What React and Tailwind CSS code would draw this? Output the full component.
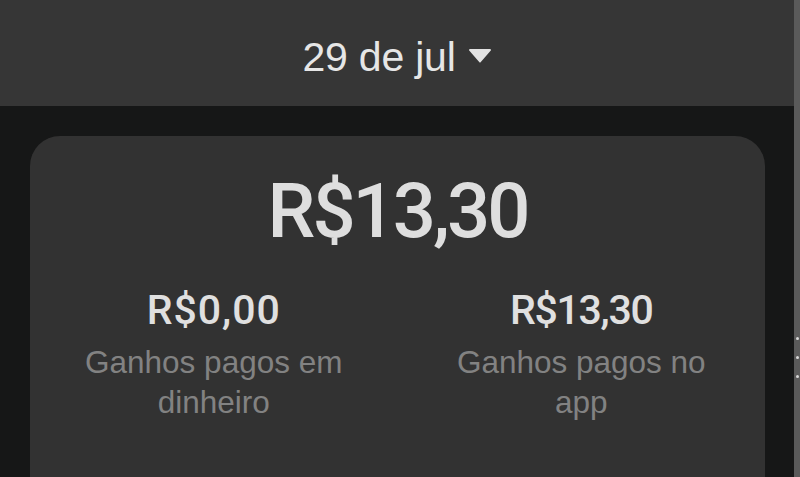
export default function App() {
  const font = { fontFamily: '"Liberation Sans", Arial, sans-serif' };
  const valueFont = { fontFamily: 'Roboto, "Liberation Sans", sans-serif' };
  return (
    <div className="flex h-[477px] w-[800px] overflow-hidden bg-[#161717]" style={font}>
      <div className="flex flex-1 flex-col">
        {/* Top bar with date picker */}
        <header className="flex h-[106px] shrink-0 items-center justify-center bg-[#363636] pt-[8px]">
          <button className="flex items-center gap-[12px] text-[41px] leading-[40px] text-[#e6e6e6]">
            <span className="tracking-[-0.2px]">29 de jul</span>
            <svg width="24" height="15" viewBox="0 0 24 15" className="mt-[-4px]">
              <path d="M2 1h20a1 1 0 0 1 .8 1.6l-10 11.4a1 1 0 0 1-1.6 0L1.2 2.6A1 1 0 0 1 2 1z" fill="#e2e2e2" />
            </svg>
          </button>
        </header>

        {/* Earnings card */}
        <main className="flex-1 pl-[30px] pr-[29px] pt-[30px]">
          <div className="h-[400px] rounded-[30px] bg-[#323232] pt-[37px]">
            <p className="text-center text-[76px] font-medium leading-[76px] tracking-[-3px] text-[#dedede]" style={valueFont}>
              R$13,30
            </p>
            <div className="mt-[41px] grid grid-cols-2">
              <div className="flex flex-col items-center px-[40px] text-center">
                <p className="text-[41px] font-medium leading-[40px] tracking-[1px] text-[#e0e0e0]" style={valueFont}>R$0,00</p>
                <p className="mt-[12px] text-[31.5px] leading-[40px] text-[#828282]">Ganhos pagos em dinheiro</p>
              </div>
              <div className="flex flex-col items-center px-[40px] text-center">
                <p className="text-[41px] font-medium leading-[40px] tracking-[-1.3px] text-[#e0e0e0]" style={valueFont}>R$13,30</p>
                <p className="mt-[12px] text-[31.5px] leading-[40px] text-[#828282]">Ganhos pagos no app</p>
              </div>
            </div>
          </div>
        </main>
      </div>

      {/* Scrollbar strip on the right edge */}
      <div className="relative w-[6px] shrink-0 bg-[#5a5a5a]">
        <div className="absolute left-[2px] top-[337px] flex flex-col gap-[16px]">
          <span className="h-[3px] w-[3px] rounded-full bg-[#d8d8d8]" />
          <span className="h-[3px] w-[3px] rounded-full bg-[#d8d8d8]" />
          <span className="h-[3px] w-[3px] rounded-full bg-[#d8d8d8]" />
        </div>
      </div>
    </div>
  );
}
